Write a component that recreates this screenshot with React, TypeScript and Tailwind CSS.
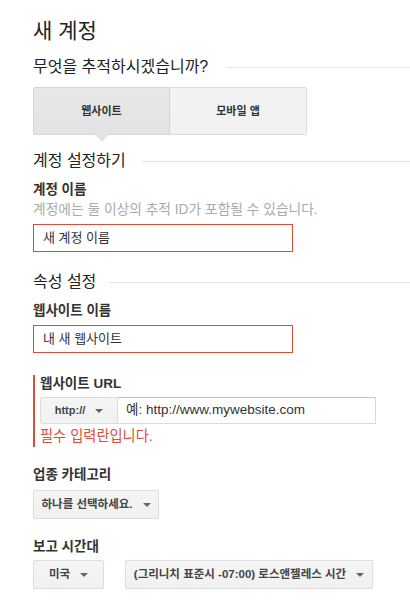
import React from "react";

const FONT = { fontFamily: "'Liberation Sans', 'Noto Sans CJK KR', sans-serif" };

function Caret() {
  return (
    <svg width="8" height="4" viewBox="0 0 8 4" className="shrink-0">
      <path d="M0 0 L8 0 L4 4 Z" fill="#666" />
    </svg>
  );
}

function SectionHeading({ text, gap, className = "" }: { text: string; gap: string; className?: string }) {
  return (
    <div className={`flex items-center ${className}`}>
      <span className="text-[16px] leading-[20px] text-[#222] whitespace-nowrap">{text}</span>
      <div className={`${gap} h-px flex-1 bg-[#e5e5e5]`} />
    </div>
  );
}

function SelectButton({ label, className = "" }: { label: string; className?: string }) {
  return (
    <div
      className={`flex h-[29px] items-center justify-center gap-[10px] rounded-[2px] border border-[#dcdcdc] bg-gradient-to-b from-[#f5f5f5] to-[#f1f1f1] text-[11.5px] font-bold text-[#444] ${className}`}
    >
      <span className="whitespace-nowrap">{label}</span>
      <Caret />
    </div>
  );
}

export default function App() {
  return (
    <div className="min-h-[610px] w-[410px] bg-white pl-[33px] pt-[19px] text-[#222]" style={FONT}>
      <h1 className="text-[21px] leading-[24px] font-normal text-[#222]">새 계정</h1>

      <SectionHeading text="무엇을 추적하시겠습니까?" gap="ml-[19px]" className="mt-[14px]" />

      <div className="relative mt-[10px] flex h-[48px] w-[274px]">
        <div className="flex w-[137px] items-center justify-center rounded-l-[2px] border border-[#d6d6d6] bg-gradient-to-b from-[#e8e8e8] to-[#e3e3e3] text-[11px] font-bold text-[#333]">
          웹사이트
        </div>
        <div className="flex w-[137px] items-center justify-center rounded-r-[2px] border border-l-0 border-[#dcdcdc] bg-[#f2f2f2] text-[11px] font-bold text-[#333]">
          모바일 앱
        </div>
        <svg
          width="14"
          height="8"
          viewBox="0 0 14 8"
          className="absolute left-[62px] top-[47px]"
        >
          <path d="M0 0 L14 0 L7 7 Z" fill="#e3e3e3" />
          <path d="M0 0.5 L7 7.5 L14 0.5" fill="none" stroke="#d6d6d6" strokeWidth="0.6" />
        </svg>
      </div>

      <SectionHeading text="계정 설정하기" gap="ml-[16px]" className="mt-[16px]" />

      <div className="mt-[10px] text-[13.5px] font-bold leading-[18px] text-[#333]">계정 이름</div>
      <div className="mt-[2px] text-[13.75px] leading-[18px] text-[#aaa]">
        계정에는 둘 이상의 추적 ID가 포함될 수 있습니다.
      </div>
      <div className="mt-[5px] flex h-[28px] w-[260px] items-center border border-[#dd4b39] px-[9px] text-[13px] text-[#333]">
        새 계정 이름
      </div>

      <SectionHeading text="속성 설정" gap="ml-[13px]" className="mt-[20px]" />

      <div className="mt-[10px] text-[13.5px] font-bold leading-[18px] text-[#333]">웹사이트 이름</div>
      <div className="mt-[5px] flex h-[28px] w-[260px] items-center border border-[#dd4b39] px-[9px] text-[13px] text-[#333]">
        내 새 웹사이트
      </div>

      <div className="mt-[22px] border-l-2 border-[#dd4b39] pl-[5px] pb-[2px]">
        <div className="text-[13.5px] font-bold leading-[18px] text-[#333]">웹사이트 URL</div>
        <div className="mt-[4px] flex h-[27px]">
          <div className="flex w-[78px] items-center justify-center gap-[10px] rounded-l-[2px] border border-[#dcdcdc] bg-gradient-to-b from-[#f5f5f5] to-[#f1f1f1] text-[11px] font-bold text-[#444]">
            <span>http://</span>
            <Caret />
          </div>
          <div className="flex w-[258px] items-center border border-l-0 border-[#d9d9d9] border-t-[#c0c0c0] pl-[8px] text-[13.5px] text-[#333]">
            예: http://www.mywebsite.com
          </div>
        </div>
        <div className="mt-[3px] text-[14.25px] leading-[18px] text-[#dd4b39]">필수 입력란입니다.</div>
      </div>

      <div className="mt-[19px] text-[13.5px] font-bold leading-[18px] text-[#333]">업종 카테고리</div>
      <SelectButton label="하나를 선택하세요." className="mt-[6px] w-[126px]" />

      <div className="mt-[19px] text-[13.5px] font-bold leading-[18px] text-[#333]">보고 시간대</div>
      <div className="mt-[4px] flex gap-[21px]">
        <SelectButton label="미국" className="w-[71px]" />
        <SelectButton label="(그리니치 표준시 -07:00) 로스앤젤레스 시간" className="w-[248px]" />
      </div>
    </div>
  );
}
